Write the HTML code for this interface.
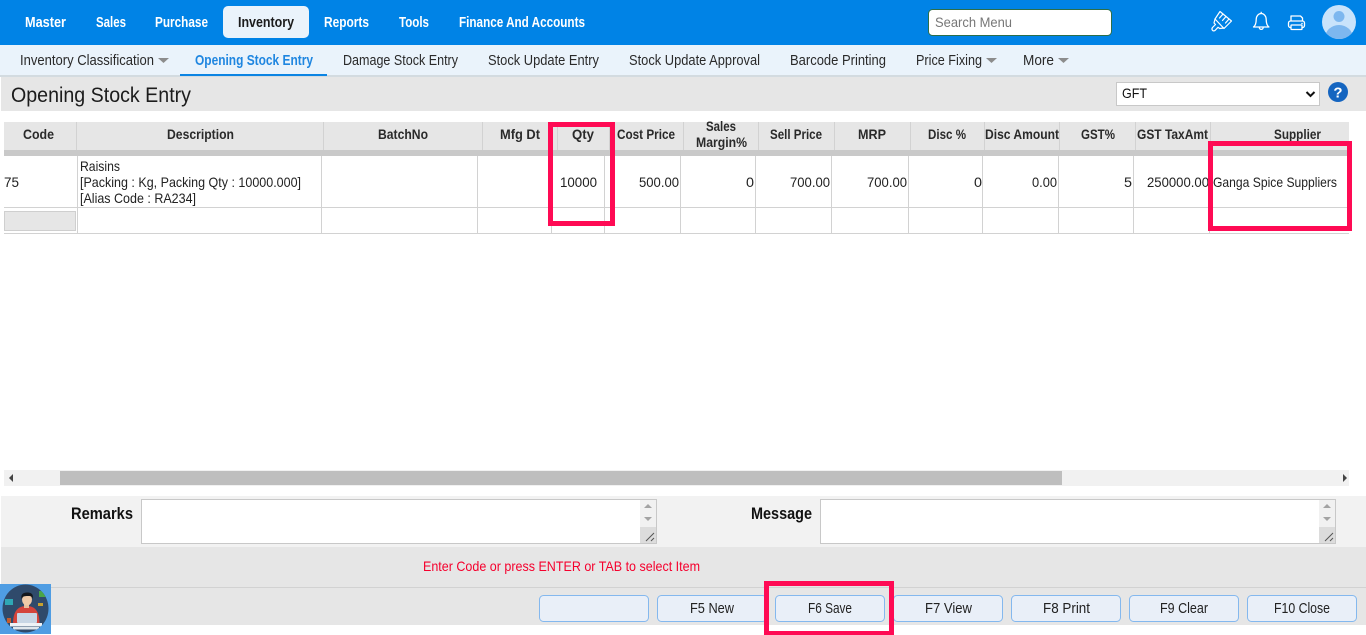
<!DOCTYPE html>
<html lang="en"><head><meta charset="utf-8"><title>Opening Stock Entry</title>
<style>
html,body{margin:0;padding:0;width:1366px;height:635px;overflow:hidden;background:#fff}
svg{display:block}
text{font-family:"Liberation Sans",Arial,sans-serif;font-size:13px;fill:#222}
.n{font-weight:700;font-size:15px;fill:#fff}
.s{font-size:15px;fill:#2a2a2a}
.h{font-weight:700;font-size:14px;fill:#2a2a2a}
.c{font-size:14px;fill:#222}
.b{font-size:15px;fill:#222}
.l{font-weight:700;font-size:17px;fill:#111}
</style></head><body>
<svg xmlns="http://www.w3.org/2000/svg" width="1366" height="635" viewBox="0 0 1366 635">
<rect width="1366" height="635" fill="#fff"/>
<!-- top nav -->
<rect width="1366" height="45" fill="#0083e6"/>
<rect x="223" y="6" width="86" height="32" rx="5" fill="#eaf3fb"/>
<text class="n" x="25" y="27" textLength="41" lengthAdjust="spacingAndGlyphs">Master</text>
<text class="n" x="96" y="27" textLength="30" lengthAdjust="spacingAndGlyphs">Sales</text>
<text class="n" x="155" y="27" textLength="53" lengthAdjust="spacingAndGlyphs">Purchase</text>
<text class="n" x="238" y="27" textLength="56" lengthAdjust="spacingAndGlyphs" style="fill:#1c1c1c">Inventory</text>
<text class="n" x="324" y="27" textLength="45" lengthAdjust="spacingAndGlyphs">Reports</text>
<text class="n" x="399" y="27" textLength="30" lengthAdjust="spacingAndGlyphs">Tools</text>
<text class="n" x="459" y="27" textLength="126" lengthAdjust="spacingAndGlyphs">Finance And Accounts</text>
<rect x="928.500" y="9.500" width="183" height="26" rx="4" fill="#fff" stroke="#2c6e49"/>
<text x="935" y="27" style="font-size:14px;fill:#777" textLength="77" lengthAdjust="spacingAndGlyphs">Search Menu</text>
<!-- brush -->
<g fill="none" stroke="#fff" stroke-width="1.200" stroke-linejoin="round" stroke-linecap="round">
<path d="M1220 11.500l11.500 9.500-7.500 7.500-9-9.500z"/>
<path d="M1223 14l-3.500 4M1226 16.500l-3.500 4M1229 19l-3.500 4"/>
<path d="M1215 19l-1 4 1.500 1.500-3 3c-1.500 2 .5 4.300 2.500 3l3-3.200 1.700 1.200 4.300-.5"/>
</g>
<!-- bell -->
<g fill="none" stroke="#fff" stroke-width="1.300" stroke-linejoin="round">
<path d="M1253.500 27c2-1.500 2.700-3.500 2.700-7.500 0-3.300 2.200-6 5-6s5 2.700 5 6c0 4 .7 6 2.700 7.500z"/>
<path d="M1259.300 27.300c0 2.800 3.900 2.800 3.900 0"/>
<path d="M1261.200 11.800v1.700"/>
</g>
<!-- printer -->
<g fill="none" stroke="#fff" stroke-width="1.300" stroke-linejoin="round">
<path d="M1291 21.500v-5.500h9.500l2 2v3.500"/>
<rect x="1288.500" y="21" width="16" height="6.500" rx="2"/>
<rect x="1291" y="25" width="11" height="4.500" rx=".5" fill="#0083e6"/>
</g>
<circle cx="1302" cy="23.500" r=".8" fill="#fff"/>
<!-- avatar -->
<clipPath id="av"><circle cx="1339" cy="22" r="17"/></clipPath>
<circle cx="1339" cy="22" r="17" fill="#c9e3fb"/>
<g clip-path="url(#av)" fill="#7db7ef"><circle cx="1339" cy="16.500" r="5.500"/><ellipse cx="1339" cy="38" rx="14" ry="13"/></g>
<!-- sub nav -->
<rect y="45" width="1366" height="30" fill="#eaf3fb"/>
<rect y="75" width="1366" height="2" fill="#d3dbe0"/>
<rect x="180" y="74" width="147" height="2" fill="#0b84e3"/>
<text class="s" x="20" y="65" textLength="134" lengthAdjust="spacingAndGlyphs">Inventory Classification</text>
<path d="M158 58h11l-5.500 5z" fill="#8c8c8c"/>
<text class="s" x="195" y="65" textLength="118" lengthAdjust="spacingAndGlyphs" style="fill:#1f86e0;font-weight:700">Opening Stock Entry</text>
<text class="s" x="343" y="65" textLength="115" lengthAdjust="spacingAndGlyphs">Damage Stock Entry</text>
<text class="s" x="488" y="65" textLength="111" lengthAdjust="spacingAndGlyphs">Stock Update Entry</text>
<text class="s" x="629" y="65" textLength="131" lengthAdjust="spacingAndGlyphs">Stock Update Approval</text>
<text class="s" x="790" y="65" textLength="96" lengthAdjust="spacingAndGlyphs">Barcode Printing</text>
<text class="s" x="916" y="65" textLength="66" lengthAdjust="spacingAndGlyphs">Price Fixing</text>
<path d="M986 58h11l-5.500 5z" fill="#8c8c8c"/>
<text class="s" x="1023" y="65" textLength="31" lengthAdjust="spacingAndGlyphs">More</text>
<path d="M1058 58h11l-5.500 5z" fill="#8c8c8c"/>
<!-- title bar -->
<rect x="1" y="77" width="1365" height="34" fill="#e6e6e6"/>
<text x="11" y="102" style="font-size:21px;fill:#1c1c1c" textLength="180" lengthAdjust="spacingAndGlyphs">Opening Stock Entry</text>
<rect x="1116.500" y="82.500" width="203" height="23" fill="#fff" stroke="#c8c8c8"/>
<text x="1122" y="98" style="font-size:14px;fill:#111" textLength="25" lengthAdjust="spacingAndGlyphs">GFT</text>
<path d="M1306.500 92l4 4 4-4" fill="none" stroke="#111" stroke-width="2"/>
<circle cx="1338" cy="92" r="10" fill="#1565c0"/>
<text x="1338" y="97.500" text-anchor="middle" style="font-size:15px;font-weight:700;fill:#fff">?</text>
<!-- table header -->
<rect x="4" y="122" width="1345" height="28" fill="#e6e6e6"/>
<rect x="4" y="150" width="1345" height="6" fill="#c9c9c9"/>
<g fill="#d2d2d2">
<rect x="76" y="122" width="1" height="28"/><rect x="323" y="122" width="1" height="28"/><rect x="482" y="122" width="1" height="28"/><rect x="557" y="122" width="1" height="28"/><rect x="609" y="122" width="1" height="28"/><rect x="683" y="122" width="1" height="28"/><rect x="758" y="122" width="1" height="28"/><rect x="834" y="122" width="1" height="28"/><rect x="910" y="122" width="1" height="28"/><rect x="984" y="122" width="1" height="28"/><rect x="1059" y="122" width="1" height="28"/><rect x="1135" y="122" width="1" height="28"/><rect x="1210" y="122" width="1" height="28"/>
</g>
<text class="h" x="23" y="139" textLength="31" lengthAdjust="spacingAndGlyphs">Code</text>
<text class="h" x="167" y="139" textLength="67" lengthAdjust="spacingAndGlyphs">Description</text>
<text class="h" x="378" y="139" textLength="50" lengthAdjust="spacingAndGlyphs">BatchNo</text>
<text class="h" x="500" y="139" textLength="40" lengthAdjust="spacingAndGlyphs">Mfg Dt</text>
<text class="h" x="572" y="139" textLength="22" lengthAdjust="spacingAndGlyphs">Qty</text>
<text class="h" x="617" y="139" textLength="58" lengthAdjust="spacingAndGlyphs">Cost Price</text>
<text class="h" x="706" y="131" textLength="30" lengthAdjust="spacingAndGlyphs">Sales</text>
<text class="h" x="696" y="147" textLength="51" lengthAdjust="spacingAndGlyphs">Margin%</text>
<text class="h" x="770" y="139" textLength="52" lengthAdjust="spacingAndGlyphs">Sell Price</text>
<text class="h" x="858" y="139" textLength="28" lengthAdjust="spacingAndGlyphs">MRP</text>
<text class="h" x="928" y="139" textLength="38" lengthAdjust="spacingAndGlyphs">Disc %</text>
<text class="h" x="985" y="139" textLength="74" lengthAdjust="spacingAndGlyphs">Disc Amount</text>
<text class="h" x="1081" y="139" textLength="34" lengthAdjust="spacingAndGlyphs">GST%</text>
<text class="h" x="1137" y="139" textLength="71" lengthAdjust="spacingAndGlyphs">GST TaxAmt</text>
<text class="h" x="1274" y="139" textLength="47" lengthAdjust="spacingAndGlyphs">Supplier</text>
<!-- table body lines -->
<g fill="#d2d2d2">
<rect x="4" y="207" width="1345" height="1"/><rect x="4" y="233" width="1345" height="1"/>
<rect x="77" y="156" width="1" height="78"/><rect x="321" y="156" width="1" height="78"/><rect x="477" y="156" width="1" height="78"/><rect x="551" y="156" width="1" height="78"/><rect x="604" y="156" width="1" height="78"/><rect x="680" y="156" width="1" height="78"/><rect x="755" y="156" width="1" height="78"/><rect x="831" y="156" width="1" height="78"/><rect x="908" y="156" width="1" height="78"/><rect x="982" y="156" width="1" height="78"/><rect x="1058" y="156" width="1" height="78"/><rect x="1133" y="156" width="1" height="78"/><rect x="1209" y="156" width="1" height="78"/>
</g>
<rect x="4.500" y="211.500" width="71" height="19" fill="#e6e6e6" stroke="#cfcfcf"/>
<text class="c" x="4" y="187" textLength="15" lengthAdjust="spacingAndGlyphs">75</text>
<text class="c" x="80" y="171" textLength="40" lengthAdjust="spacingAndGlyphs">Raisins</text>
<text class="c" x="80" y="187" textLength="221" lengthAdjust="spacingAndGlyphs">[Packing : Kg, Packing Qty : 10000.000]</text>
<text class="c" x="80" y="203" textLength="116" lengthAdjust="spacingAndGlyphs">[Alias Code : RA234]</text>
<text class="c" x="560" y="187" textLength="37" lengthAdjust="spacingAndGlyphs">10000</text>
<text class="c" x="639" y="187" textLength="40" lengthAdjust="spacingAndGlyphs">500.00</text>
<text class="c" x="746" y="187" textLength="8" lengthAdjust="spacingAndGlyphs">0</text>
<text class="c" x="790" y="187" textLength="40" lengthAdjust="spacingAndGlyphs">700.00</text>
<text class="c" x="867" y="187" textLength="40" lengthAdjust="spacingAndGlyphs">700.00</text>
<text class="c" x="974" y="187" textLength="8" lengthAdjust="spacingAndGlyphs">0</text>
<text class="c" x="1032" y="187" textLength="25" lengthAdjust="spacingAndGlyphs">0.00</text>
<text class="c" x="1124" y="187" textLength="8" lengthAdjust="spacingAndGlyphs">5</text>
<text class="c" x="1147" y="187" textLength="62" lengthAdjust="spacingAndGlyphs">250000.00</text>
<text class="c" x="1213" y="187" textLength="124" lengthAdjust="spacingAndGlyphs">Ganga Spice Suppliers</text>
<!-- scrollbar -->
<rect x="4" y="470" width="1345" height="16" fill="#f1f1f1"/>
<rect x="60" y="471" width="1002" height="14" fill="#bebebe"/>
<path d="M9 478l4-4v8z" fill="#444"/><path d="M1343 474l4 4-4 4z" fill="#444"/>
<!-- remarks -->
<rect x="1" y="496" width="1365" height="51" fill="#f2f2f2"/>
<text class="l" x="71" y="519" textLength="62" lengthAdjust="spacingAndGlyphs">Remarks</text>
<text class="l" x="751" y="519" textLength="61" lengthAdjust="spacingAndGlyphs">Message</text>
<g>
<rect x="141.500" y="499.500" width="515" height="44" fill="#fff" stroke="#c8c8c8"/>
<rect x="640" y="500" width="16" height="43" fill="#f1f1f1"/><rect x="640" y="527" width="16" height="16" fill="#dcdcdc"/>
<path d="M648 504l4 4h-8zM648 521l-4-4h8z" fill="#a3a3a3"/>
<path d="M646 541l8-8M651 541l3-3" stroke="#555" stroke-width="1" fill="none"/>
<rect x="820.500" y="499.500" width="515" height="44" fill="#fff" stroke="#c8c8c8"/>
<rect x="1319" y="500" width="16" height="43" fill="#f1f1f1"/><rect x="1319" y="527" width="16" height="16" fill="#dcdcdc"/>
<path d="M1327 504l4 4h-8zM1327 521l-4-4h8z" fill="#a3a3a3"/>
<path d="M1325 541l8-8M1330 541l3-3" stroke="#555" stroke-width="1" fill="none"/>
</g>
<!-- status -->
<rect x="1" y="547" width="1365" height="40" fill="#e6e6e6"/>
<text x="423" y="571" style="font-size:14px;fill:#f5002d" textLength="277" lengthAdjust="spacingAndGlyphs">Enter Code or press ENTER or TAB to select Item</text>
<rect x="1" y="587" width="1365" height="1" fill="#d2d2d2"/>
<rect x="1" y="588" width="1365" height="37" fill="#e6e6e6"/>
<!-- buttons -->
<g fill="#e9eff8" stroke="#84b8ee">
<rect x="539.500" y="595.500" width="109" height="26" rx="4"/><rect x="657.500" y="595.500" width="109" height="26" rx="4"/><rect x="775.500" y="595.500" width="109" height="26" rx="4"/><rect x="893.500" y="595.500" width="109" height="26" rx="4"/><rect x="1011.500" y="595.500" width="109" height="26" rx="4"/><rect x="1129.500" y="595.500" width="109" height="26" rx="4"/><rect x="1247.500" y="595.500" width="109" height="26" rx="4"/>
</g>
<text class="b" x="690" y="613" textLength="44" lengthAdjust="spacingAndGlyphs">F5 New</text>
<text class="b" x="808" y="613" textLength="44" lengthAdjust="spacingAndGlyphs">F6 Save</text>
<text class="b" x="925" y="613" textLength="47" lengthAdjust="spacingAndGlyphs">F7 View</text>
<text class="b" x="1043" y="613" textLength="47" lengthAdjust="spacingAndGlyphs">F8 Print</text>
<text class="b" x="1160" y="613" textLength="48" lengthAdjust="spacingAndGlyphs">F9 Clear</text>
<text class="b" x="1274" y="613" textLength="56" lengthAdjust="spacingAndGlyphs">F10 Close</text>
<!-- support avatar -->
<rect x="0" y="584" width="51" height="50" fill="#4f9de3"/>
<ellipse cx="25.500" cy="608.500" rx="23" ry="24" fill="#2f4a6b"/>
<clipPath id="ci"><ellipse cx="25.500" cy="608.500" rx="23" ry="24"/></clipPath>
<g clip-path="url(#ci)">
<path d="M13 624c0-13 5-18 13.500-18s13 5 13 18z" fill="#d4443c"/>
<rect x="24" y="603" width="5" height="5" fill="#e7bd9b"/>
<ellipse cx="27" cy="599.500" rx="5" ry="6" fill="#efc9a7"/>
<path d="M21.500 599c-1-5 2-6.500 5.500-6.500s7 1 5.500 6.500c-.5-2-1.500-3-3-3-2.500 0-5.500 0-6.500 1z" fill="#15181d"/>
<rect x="17" y="613" width="20" height="10" rx="1" fill="#c8d6e5"/>
<rect x="10" y="623" width="32" height="3.500" fill="#eef2f6"/>
<rect x="13" y="627" width="26" height="2.500" fill="#dfe6ec"/>
<rect x="5" y="599" width="8" height="6" fill="#2fa7b5"/>
<rect x="39" y="591" width="9" height="6" fill="#4aa548"/>
<rect x="38" y="603" width="5" height="3" fill="#c8a12e"/>
<rect x="7" y="618" width="4" height="5" fill="#c75c2c"/>
</g>
<!-- annotations -->
<g fill="none" stroke="#ff0a54" stroke-width="5">
<rect x="550.500" y="124.500" width="62" height="99"/>
<rect x="1210.500" y="143.500" width="139" height="85"/>
<rect x="766.500" y="583.500" width="125" height="50"/>
</g>
</svg>
</body></html>
